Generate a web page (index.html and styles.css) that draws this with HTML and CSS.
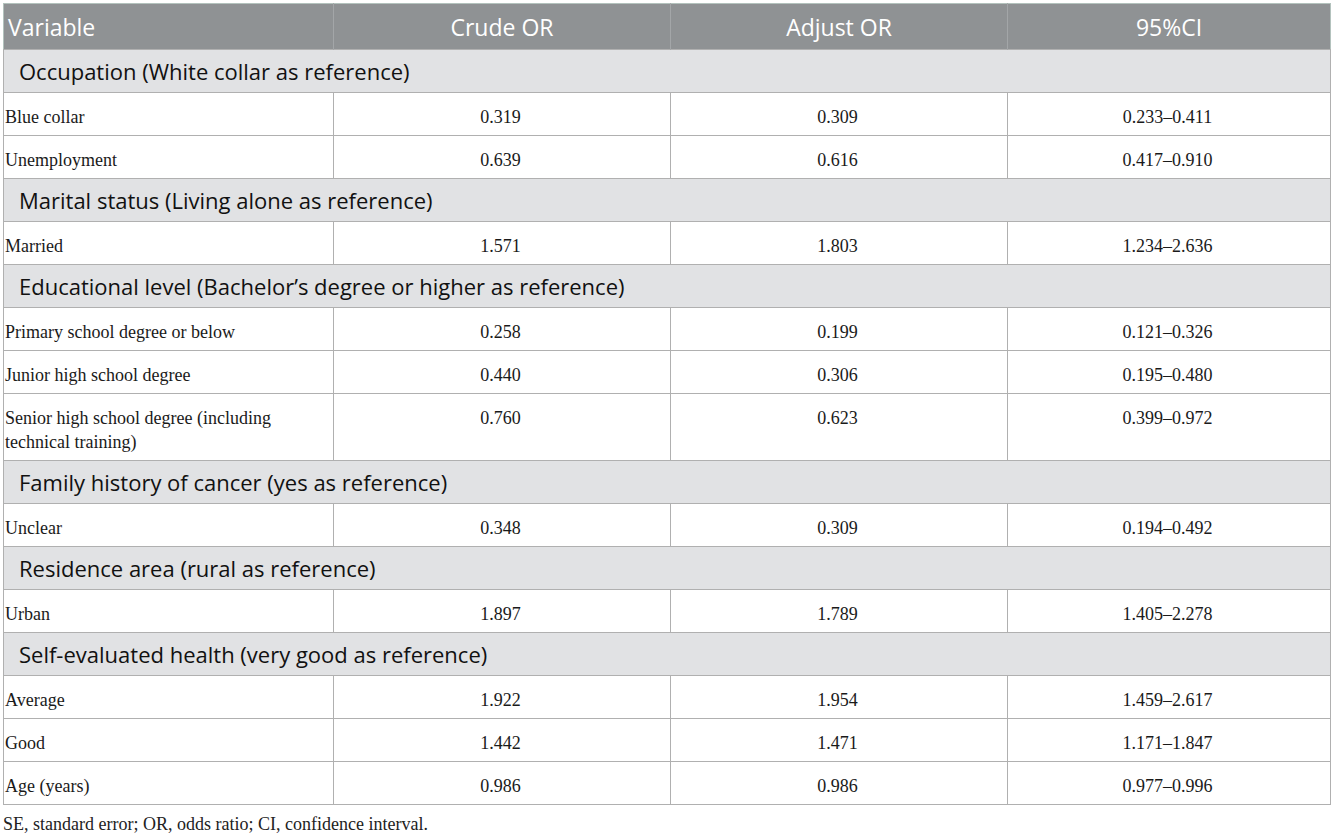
FILE: index.html
```html
<!DOCTYPE html>
<html lang="en">
<head>
  <meta charset="UTF-8" />
  <title>Odds ratios</title>
  <link rel="stylesheet" href="styles.css">
</head>
<body>
  <table class="or-table">
    <colgroup>
      <col class="c-var">
      <col class="c-num">
      <col class="c-num">
      <col class="c-ci">
    </colgroup>
    <thead>
      <tr>
        <th class="left">Variable</th>
        <th>Crude OR</th>
        <th>Adjust OR</th>
        <th>95%CI</th>
      </tr>
    </thead>
    <tbody>
      <tr class="section"><td colspan="4">Occupation (White collar as reference)</td></tr>
      <tr><td>Blue collar</td><td>0.319</td><td>0.309</td><td>0.233–0.411</td></tr>
      <tr><td>Unemployment</td><td>0.639</td><td>0.616</td><td>0.417–0.910</td></tr>

      <tr class="section"><td colspan="4">Marital status (Living alone as reference)</td></tr>
      <tr><td>Married</td><td>1.571</td><td>1.803</td><td>1.234–2.636</td></tr>

      <tr class="section"><td colspan="4">Educational level (Bachelor’s degree or higher as reference)</td></tr>
      <tr><td>Primary school degree or below</td><td>0.258</td><td>0.199</td><td>0.121–0.326</td></tr>
      <tr><td>Junior high school degree</td><td>0.440</td><td>0.306</td><td>0.195–0.480</td></tr>
      <tr><td>Senior high school degree (including technical training)</td><td>0.760</td><td>0.623</td><td>0.399–0.972</td></tr>

      <tr class="section"><td colspan="4">Family history of cancer (yes as reference)</td></tr>
      <tr><td>Unclear</td><td>0.348</td><td>0.309</td><td>0.194–0.492</td></tr>

      <tr class="section"><td colspan="4">Residence area (rural as reference)</td></tr>
      <tr><td>Urban</td><td>1.897</td><td>1.789</td><td>1.405–2.278</td></tr>

      <tr class="section"><td colspan="4">Self-evaluated health (very good as reference)</td></tr>
      <tr><td>Average</td><td>1.922</td><td>1.954</td><td>1.459–2.617</td></tr>
      <tr><td>Good</td><td>1.442</td><td>1.471</td><td>1.171–1.847</td></tr>
      <tr><td>Age (years)</td><td>0.986</td><td>0.986</td><td>0.977–0.996</td></tr>
    </tbody>
  </table>
  <p class="note">SE, standard error; OR, odds ratio; CI, confidence interval.</p>
</body>
</html>
```

FILE: styles.css
```css
/* Base */
* {
  box-sizing: border-box;
}
body {
  margin: 0;
  padding: 3px 4px 0 3px;
  background: #fff;
  color: #1a1a1a;
  font-family: "Liberation Serif", "Times New Roman", serif;
}

/* Table */
.or-table {
  width: 1327px;
  border-collapse: collapse;
  table-layout: fixed;
  border: 1px solid #b3c2bd;
}
.c-var { width: 330px; }
.c-num { width: 337px; }
.c-ci { width: 323px; }

.or-table th {
  height: 46px;
  padding: 0 8px;
  background: #8f9294;
  color: #fff;
  font-family: "Open Sans", "Noto Sans", sans-serif;
  font-weight: 400;
  font-size: 23px;
  text-align: center;
  border-left: 1px solid #a3a6a8;
}
.or-table th.left {
  text-align: left;
  padding-left: 4px;
  border-left: none;
}

.or-table td {
  padding: 12px 4px 6px 1px;
  font-size: 18px;
  line-height: 24px;
  text-align: center;
  vertical-align: top;
  border: 1px solid #b0b0b0;
}
.or-table td:first-child {
  text-align: left;
  padding-right: 30px;
}

.or-table .section td {
  padding: 9px 15px 8px 15px;
  background: #e1e2e4;
  color: #111;
  font-family: "Open Sans", "Noto Sans", sans-serif;
  font-size: 22px;
  line-height: 25px;
  text-align: left;
}

/* Footnote */
.note {
  margin: 9px 0 0;
  font-size: 18px;
  line-height: 20px;
  color: #222;
}
```
